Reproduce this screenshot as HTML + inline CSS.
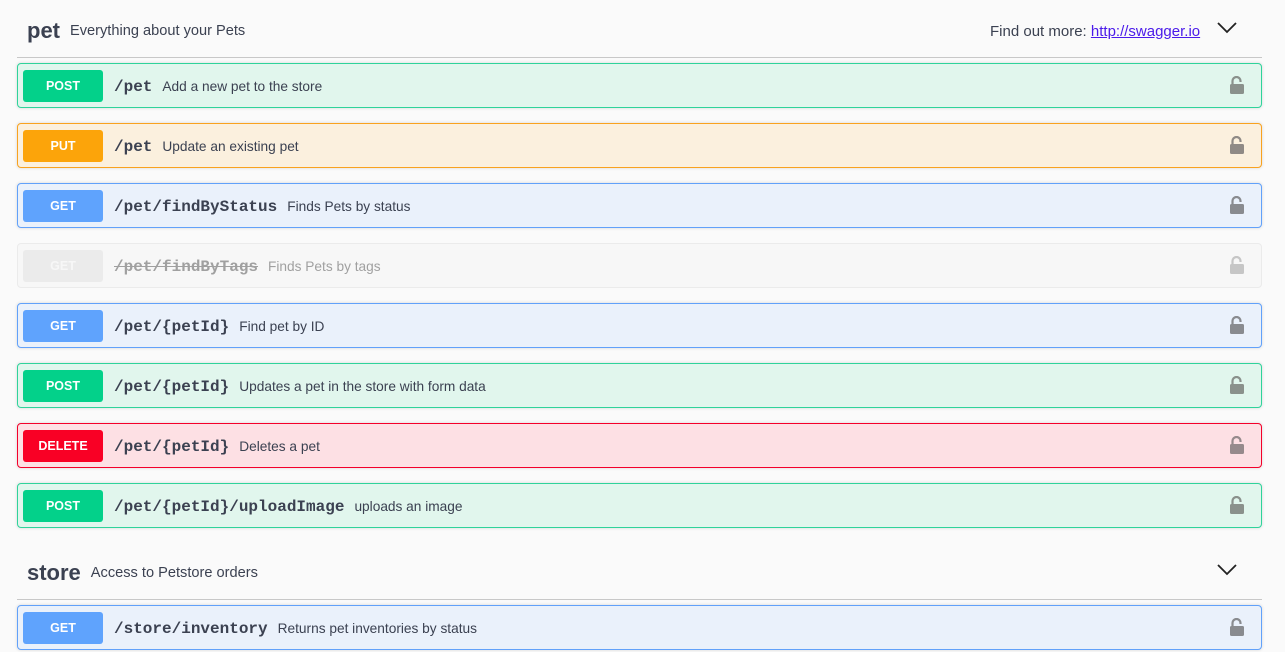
<!DOCTYPE html>
<html><head><meta charset="utf-8"><style>
body{margin:0;background:#fafafa;width:1285px;height:652px;overflow:hidden;font-family:"Liberation Sans",sans-serif;color:#3b4151;position:relative}
.h{position:absolute;left:27px;display:flex;align-items:center}
.h b{font-size:22px;font-weight:bold;color:#3b4151}
.h span{font-size:14.6px;margin-left:10px}
.line{position:absolute;left:17px;width:1245px;height:1px;background:#c8c8c8}
.chev{position:absolute;width:20px;height:12px}
.op{position:absolute;left:17px;width:1243px;height:43px;border:1px solid;border-radius:4px;display:flex;align-items:center;box-shadow:0 0 3px rgba(0,0,0,.15)}
.m{margin-left:5px;width:80px;height:32px;border-radius:3px;color:#fff;font-weight:bold;font-size:12.5px;display:flex;align-items:center;justify-content:center;padding-top:1px;box-sizing:border-box}
.p{margin-left:11px;font-family:"Liberation Mono",monospace;font-weight:bold;font-size:16px;color:#3b4151;padding-top:2px}
.d{margin-left:10px;font-size:13.7px;color:#3b4151;padding-top:2px}
.lock{position:absolute;right:16px;top:12px}
.post{background:#e1f6ed;border-color:#2fd39b}.post .m{background:#03d18a}
.put{background:#fbf0de;border-color:#f9a21f}.put .m{background:#fca40a}
.get{background:#eaf1fb;border-color:#61a1fa}.get .m{background:#5fa3fd}
.del{background:#fde0e4;border-color:#f4002a}.del .m{background:#f90025}
.dep{background:#f7f7f7;border-color:#ebebeb;box-shadow:none}.dep .m{background:#ebebeb;color:#f7f7f7}
.dep .p,.dep .d{color:#8b8b8b;opacity:.8}.dep .p{text-decoration:line-through}
</style></head><body>
<div class="h" style="top:18px"><b>pet</b><span>Everything about your Pets</span></div>
<div style="position:absolute;left:990px;top:23px;font-size:15px">Find out more: <a style="color:#4b1bea;text-decoration:underline">http://swagger.io</a></div>
<svg class="chev" style="left:1217px;top:22px" viewBox="0 0 20 12"><path d="M1 1L10 10L19 1" fill="none" stroke="#222" stroke-width="1.8"/></svg>
<div class="line" style="top:57px"></div>

<div class="op post" style="top:63px"><div class="m">POST</div><div class="p">/pet</div><div class="d">Add a new pet to the store</div><svg class="lock" width="16" height="18" viewBox="0 0 16 18"><path d="M3.5 8V5a4 4 0 0 1 8 0v1" fill="none" stroke="#8a918c" stroke-width="2.2"/><rect x="1" y="8" width="14" height="10" rx="1.5" fill="#8a918c"/></svg></div>
<div class="op put" style="top:123px"><div class="m">PUT</div><div class="p">/pet</div><div class="d">Update an existing pet</div><svg class="lock" width="16" height="18" viewBox="0 0 16 18"><path d="M3.5 8V5a4 4 0 0 1 8 0v1" fill="none" stroke="#8f8a86" stroke-width="2.2"/><rect x="1" y="8" width="14" height="10" rx="1.5" fill="#8f8a86"/></svg></div>
<div class="op get" style="top:183px"><div class="m">GET</div><div class="p">/pet/findByStatus</div><div class="d">Finds Pets by status</div><svg class="lock" width="16" height="18" viewBox="0 0 16 18"><path d="M3.5 8V5a4 4 0 0 1 8 0v1" fill="none" stroke="#898b8f" stroke-width="2.2"/><rect x="1" y="8" width="14" height="10" rx="1.5" fill="#898b8f"/></svg></div>
<div class="op dep" style="top:243px"><div class="m">GET</div><div class="p">/pet/findByTags</div><div class="d">Finds Pets by tags</div><svg class="lock" width="16" height="18" viewBox="0 0 16 18"><path d="M3.5 8V5a4 4 0 0 1 8 0v1" fill="none" stroke="#c6c6c6" stroke-width="2.2"/><rect x="1" y="8" width="14" height="10" rx="1.5" fill="#c6c6c6"/></svg></div>
<div class="op get" style="top:303px"><div class="m">GET</div><div class="p">/pet/{petId}</div><div class="d">Find pet by ID</div><svg class="lock" width="16" height="18" viewBox="0 0 16 18"><path d="M3.5 8V5a4 4 0 0 1 8 0v1" fill="none" stroke="#898b8f" stroke-width="2.2"/><rect x="1" y="8" width="14" height="10" rx="1.5" fill="#898b8f"/></svg></div>
<div class="op post" style="top:363px"><div class="m">POST</div><div class="p">/pet/{petId}</div><div class="d">Updates a pet in the store with form data</div><svg class="lock" width="16" height="18" viewBox="0 0 16 18"><path d="M3.5 8V5a4 4 0 0 1 8 0v1" fill="none" stroke="#8a918c" stroke-width="2.2"/><rect x="1" y="8" width="14" height="10" rx="1.5" fill="#8a918c"/></svg></div>
<div class="op del" style="top:423px"><div class="m">DELETE</div><div class="p">/pet/{petId}</div><div class="d">Deletes a pet</div><svg class="lock" width="16" height="18" viewBox="0 0 16 18"><path d="M3.5 8V5a4 4 0 0 1 8 0v1" fill="none" stroke="#968a8c" stroke-width="2.2"/><rect x="1" y="8" width="14" height="10" rx="1.5" fill="#968a8c"/></svg></div>
<div class="op post" style="top:483px"><div class="m">POST</div><div class="p">/pet/{petId}/uploadImage</div><div class="d">uploads an image</div><svg class="lock" width="16" height="18" viewBox="0 0 16 18"><path d="M3.5 8V5a4 4 0 0 1 8 0v1" fill="none" stroke="#8a918c" stroke-width="2.2"/><rect x="1" y="8" width="14" height="10" rx="1.5" fill="#8a918c"/></svg></div>

<div class="h" style="top:560px"><b>store</b><span>Access to Petstore orders</span></div>
<svg class="chev" style="left:1217px;top:564px" viewBox="0 0 20 12"><path d="M1 1L10 10L19 1" fill="none" stroke="#222" stroke-width="1.8"/></svg>
<div class="line" style="top:599px"></div>
<div class="op get" style="top:605px"><div class="m">GET</div><div class="p">/store/inventory</div><div class="d">Returns pet inventories by status</div><svg class="lock" width="16" height="18" viewBox="0 0 16 18"><path d="M3.5 8V5a4 4 0 0 1 8 0v1" fill="none" stroke="#898b8f" stroke-width="2.2"/><rect x="1" y="8" width="14" height="10" rx="1.5" fill="#898b8f"/></svg></div>
</body></html>
